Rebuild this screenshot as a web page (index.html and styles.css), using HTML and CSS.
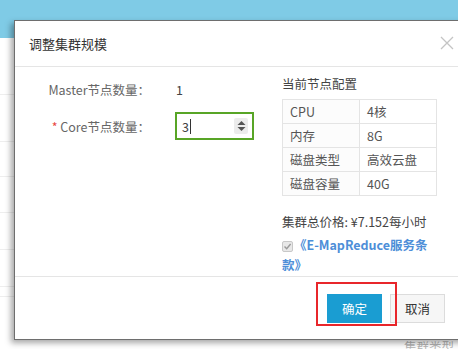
FILE: index.html
```html
<!DOCTYPE HTML>
<html>

<head>
    <meta name="viewport" content="width=device-width, initial-scale=1">
    <title>调整集群规模</title>
    <link rel="stylesheet" href="styles.css">
</head>

<body>
    <div class="page">
        <div class="topbar"></div>
        <div class="bgRow" style="height: 56px"></div>
        <div class="bgRow" style="height: 46px"></div>
        <div class="bgRow" style="height: 34px"></div>
        <div class="bgRow" style="height: 35px"></div>
        <div class="bgRow" style="height: 36px"></div>
        <div class="bgRow" style="height: 36px"></div>
        <div class="bgRow" style="height: 9px"></div>
        <div class="bgText">集群类型</div>
    </div>

    <div class="modal">
        <div class="modalHeader">
            <span class="modalTitle">调整集群规模</span>
            <svg class="closeIcon" width="14" height="14" viewBox="0 0 14 14">
                <path d="M1 1 L13 13 M13 1 L1 13" stroke="#c4c4c4" stroke-width="1.3" fill="none" />
            </svg>
        </div>
        <div class="modalBody">
            <div class="formColumn">
                <div class="formRow">
                    <span class="formLabel">Master节点数量：</span>
                    <span class="formValue">1</span>
                </div>
                <div class="formRow">
                    <span class="formLabel"><span class="required">*</span> Core节点数量：</span>
                    <div class="numberInput">
                        <span class="inputText">3</span><span class="caret"></span>
                        <span class="spinner">
                            <svg width="9" height="12" viewBox="0 0 9 12">
                                <path d="M0.5 5 L4.5 1 L8.5 5 Z M0.5 7 L4.5 11 L8.5 7 Z" fill="#555" />
                            </svg>
                        </span>
                    </div>
                </div>
            </div>
            <div class="infoColumn">
                <div class="infoTitle">当前节点配置</div>
                <table class="configTable">
                    <tr><td>CPU</td><td>4核</td></tr>
                    <tr><td>内存</td><td>8G</td></tr>
                    <tr><td>磁盘类型</td><td>高效云盘</td></tr>
                    <tr><td>磁盘容量</td><td>40G</td></tr>
                </table>
                <div class="price">集群总价格: ¥7.152每小时</div>
                <div class="terms">
                    <span class="checkbox">
                        <svg width="9" height="9" viewBox="0 0 9 9">
                            <path d="M1.5 4.5 L3.7 6.8 L7.6 2" stroke="#9a9a9a" stroke-width="1.4" fill="none" />
                        </svg>
                    </span><a class="termsLink">《E-MapReduce服务条款》</a>
                </div>
            </div>
        </div>
        <div class="modalFooter">
            <button class="okButton">确定</button>
            <button class="cancelButton">取消</button>
            <div class="highlight"></div>
        </div>
    </div>
</body>

</html>
```

FILE: styles.css
```css
html {
    font-family: "Noto Sans CJK SC", "Liberation Sans", sans-serif;
    font-size: 12.5px;
}

body {
    margin: 0px;
    width: 458px;
    height: 349px;
    overflow: hidden;
    position: relative;
    background: #fff;
}

.topbar {
    height: 38px;
    background: #7fcbe6;
}

.bgRow {
    border-bottom: 1px solid #eeeeee;
}

.bgText {
    padding-top: 42px;
    text-align: right;
    padding-right: 4px;
    color: #b5b5b5;
    line-height: 16px;
}

/* dialog lies over the page */
.modal {
    position: absolute;
    left: 14px;
    top: 20px;
    width: 460px;
    height: 320px;
    box-sizing: border-box;
    background: #fff;
    border: 1px solid #6e6e6e;
    box-shadow: -3px 3px 6px rgba(0, 0, 0, 0.35);
}

.modalHeader {
    height: 45px;
    border-bottom: 1px solid #e5e5e5;
    display: flex;
    align-items: center;
    justify-content: space-between;
    padding: 0 19px 0 14px;
}

.modalTitle {
    color: #333;
    font-size: 13px;
}

.closeIcon {
    margin-top: -2px;
}

.modalBody {
    height: 209px;
    display: flex;
    border-bottom: 1px solid #e5e5e5;
}

.formColumn {
    width: 267px;
    padding-top: 8px;
}

.formRow {
    display: flex;
    align-items: center;
    height: 28px;
    margin-bottom: 9px;
}

.formLabel {
    width: 135px;
    text-align: right;
    color: #666;
}

.required {
    color: #e8473f;
}

.formValue {
    margin-left: 26px;
    color: #444;
}

.numberInput {
    margin-left: 25px;
    width: 79px;
    height: 28px;
    box-sizing: border-box;
    border: 2px solid #58a526;
    display: flex;
    align-items: center;
    padding-left: 5px;
    position: relative;
    color: #444;
}

.caret {
    display: inline-block;
    width: 1px;
    height: 15px;
    background: #333;
    margin-left: 1px;
}

.spinner {
    margin-left: auto;
    margin-right: 4px;
    width: 14px;
    height: 16px;
    border-radius: 2px;
    background: #ececec;
    display: flex;
    align-items: center;
    justify-content: center;
}

.infoColumn {
    width: 154px;
    padding-top: 8px;
    color: #555;
}

.infoTitle {
    line-height: 18px;
    color: #444;
}

.configTable {
    margin-top: 6px;
    width: 155px;
    border-collapse: collapse;
}

.configTable td {
    border: 1px solid #e4e4e4;
    height: 23px;
    padding: 0 0 0 7px;
    width: 50%;
    line-height: 16px;
    color: #555;
}

.configTable td:first-child {
    background: #fcfcfc;
}

.price {
    margin-top: 17px;
    line-height: 18px;
    color: #444;
}

.terms {
    margin-top: 4px;
    line-height: 20px;
}

.checkbox {
    display: inline-flex;
    align-items: center;
    justify-content: center;
    width: 9px;
    height: 9px;
    border: 1px solid #c8c8c8;
    border-radius: 2px;
    background: #e8e8e8;
    margin-right: 1px;
    vertical-align: -1px;
}

.termsLink {
    color: #4d8ed8;
    font-weight: bold;
}

.modalFooter {
    position: relative;
    display: flex;
    justify-content: flex-end;
    padding: 17px 28px 0 0;
}

.okButton {
    border: 0;
    width: 55px;
    height: 29px;
    font-family: inherit;
    font-size: 12.5px;
    color: #fff;
    background-color: #1a9dd2;
}

.cancelButton {
    margin-left: 8px;
    width: 55px;
    height: 29px;
    font-family: inherit;
    font-size: 12.5px;
    color: #333;
    background-color: #f6f6f6;
    border: 1px solid #dcdcdc;
}

/* red annotation box round the confirm button */
.highlight {
    position: absolute;
    left: 301px;
    top: 5px;
    width: 81px;
    height: 44px;
    box-sizing: border-box;
    border: 2px solid #e8262b;
}
```
